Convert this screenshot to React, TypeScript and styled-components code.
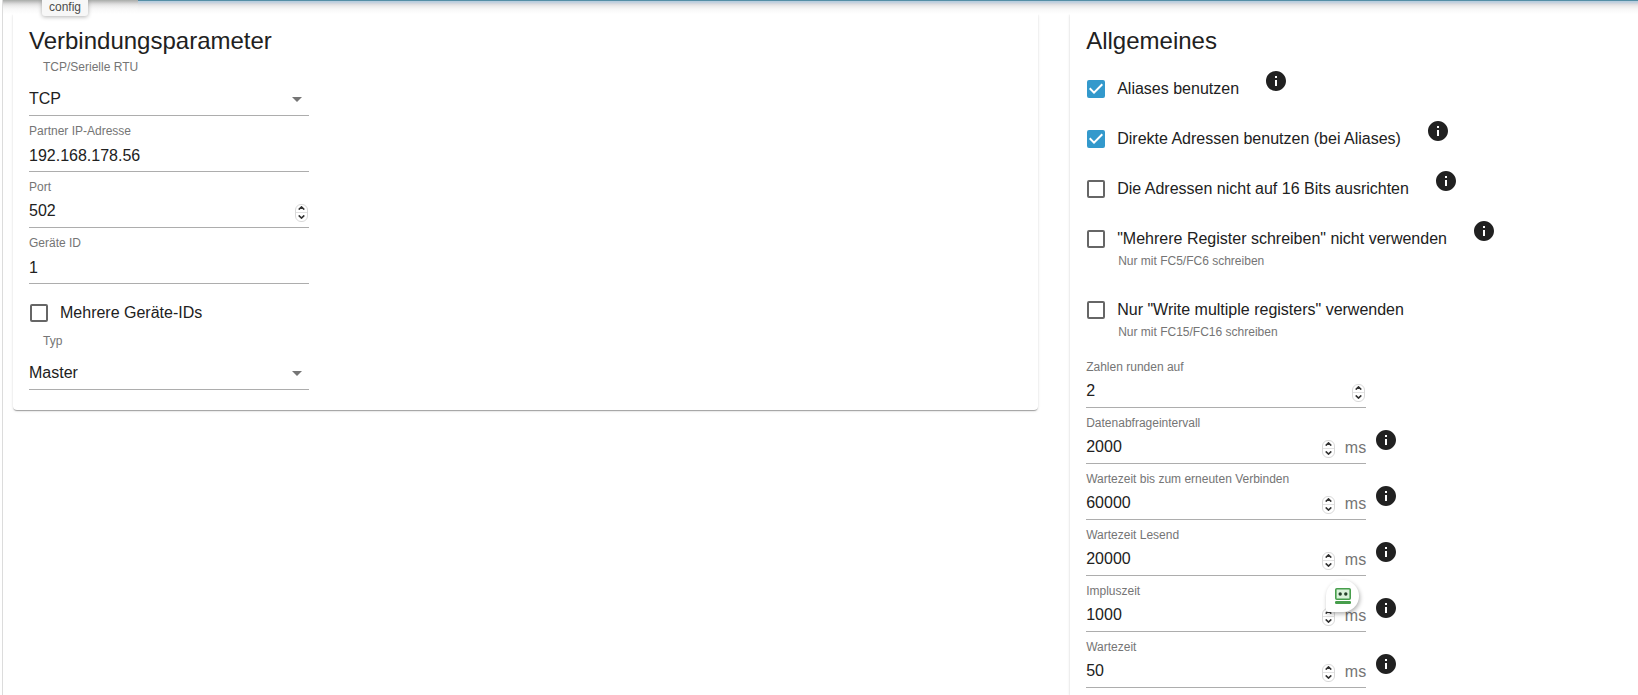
import React, { useId, useState } from "react";
import styled, { createGlobalStyle } from "styled-components";

const GlobalStyle = createGlobalStyle`
  *, *::before, *::after { box-sizing: border-box; }
  body {
    margin: 0;
    background: #fff;
    color: #212121;
    font-family: "Liberation Sans", Arial, sans-serif;
    font-size: 16px;
    line-height: 24px;
  }
`;

const Page = styled.div`
  display: flex;
  flex-direction: column;
  min-height: 100vh;
  margin-left: 2px;
  border-left: 1px solid #dcdcdc;
  overflow: hidden;
`;

const AppBar = styled.header`
  position: relative;
  height: 14px;
  border-top: 1px solid #558fa6;
  background: linear-gradient(#b4cbdc 0, #c8d3df 2px, #dcdcde 3px, #ebebeb 5px, #f7f7f7 8px, #fff 13px);
`;

const ActiveTab = styled.div`
  width: 135px;
  height: 14px;
  margin-top: -1px;
  background: linear-gradient(#a9aca9 0, #c4c4c4 2px, #dedede 4px, #ededed 6px, #f8f8f8 9px, #fff 14px);
`;

const Tooltip = styled.div`
  position: absolute;
  top: -1px;
  left: 39px;
  padding: 0 7px 1px;
  border-radius: 0 0 3px 3px;
  background: #f7f7f7;
  box-shadow: 0 1px 4px rgba(0, 0, 0, 0.3);
  color: #4c4c4c;
  font-size: 12px;
  line-height: 15px;
`;

const Columns = styled.main`
  display: grid;
  flex: 1;
  grid-template-columns: 65fr 36fr;
  gap: 32px;
  margin-left: 10px;
`;

const Card = styled.section<{ $fill?: boolean }>`
  align-self: ${(p) => (p.$fill ? "stretch" : "start")};
  padding: 9px 16px ${(p) => (p.$fill ? "7px" : "20px")};
  border-radius: ${(p) => (p.$fill ? "0" : "0 0 4px 4px")};
  box-shadow: 0 2px 1px -1px rgba(0, 0, 0, 0.2), 0 1px 1px rgba(0, 0, 0, 0.14),
    0 1px 3px rgba(0, 0, 0, 0.12);
  clip-path: ${(p) => (p.$fill ? "inset(0 0 0 -4px)" : "inset(0 -4px -4px -4px)")};
`;

const Title = styled.h2`
  margin: 0;
  font-size: 24px;
  font-weight: 400;
  line-height: 36px;
`;

const Options = styled.div`
  padding-top: 5px;
`;

const FieldRow = styled.div`
  display: flex;
  align-items: flex-start;
  gap: 8px;
`;

const FieldBox = styled.div`
  position: relative;
  width: 280px;
  max-width: 100%;
  padding-top: 7px;
  border-bottom: 1px solid #adadad;
`;

const SelectBox = styled(FieldBox)`
  padding-top: 0;
`;

const FieldLabel = styled.label`
  display: block;
  color: #757575;
  font-size: 12px;
  line-height: 16px;
`;

const SelectLabel = styled(FieldLabel)`
  padding: 0 0 8px 14px;
`;

const Control = styled.div`
  display: flex;
  align-items: center;
  height: 32px;
`;

const TextInput = styled.input`
  flex: 1;
  min-width: 0;
  height: 32px;
  padding: 0;
  border: 0;
  outline: 0;
  background: transparent;
  color: inherit;
  font: inherit;
  appearance: textfield;

  &[type="text"] {
    padding-top: 2px;
  }

  &::-webkit-inner-spin-button,
  &::-webkit-outer-spin-button {
    margin: 0;
    appearance: none;
  }
`;

const SelectInput = styled.select`
  grid-area: 1 / 1;
  width: 100%;
  height: 32px;
  padding: 0 24px 0 0;
  border: 0;
  outline: 0;
  appearance: none;
  background: transparent;
  color: inherit;
  font: inherit;
`;

const SelectControl = styled.div`
  display: grid;
  align-items: center;
`;

const DropArrow = styled.svg`
  grid-area: 1 / 1;
  justify-self: end;
  width: 24px;
  height: 24px;
  fill: #757575;
  pointer-events: none;
`;

const Spinner = styled.span`
  display: flex;
  flex-direction: column;
  width: 13px;
  height: 18px;
  margin: 3px 1px 0 0;
  border: 1px solid #d9d9d9;
  border-radius: 6px;
  overflow: hidden;
`;

const Step = styled.button`
  display: flex;
  flex: 1;
  align-items: center;
  justify-content: center;
  padding: 0;
  border: 0;
  background: transparent;

  & + & {
    border-top: 1px solid #e2e2e2;
  }

  svg {
    width: 7px;
    height: 4px;
    fill: none;
    stroke: #333;
    stroke-width: 1.6;
  }
`;

const Unit = styled.span`
  padding: 2px 0 0 9px;
  color: #757575;
`;

const OptionRow = styled.div<{ $spaced?: boolean }>`
  display: flex;
  align-items: flex-start;
  margin-bottom: ${(p) => (p.$spaced ? "4px" : "0")};
`;

const OptionText = styled.div<{ $hinted?: boolean }>`
  padding: 13px 0 ${(p) => (p.$hinted ? "12px" : "13px")};
`;

const CheckLabel = styled.label`
  display: flex;
  align-items: center;
  gap: 12px;
`;

const SingleCheck = styled.div`
  padding: 17px 0 8px;
`;

const CheckMark = styled.span`
  display: grid;
  margin-left: 1px;

  input {
    grid-area: 1 / 1;
    width: 18px;
    height: 18px;
    margin: 0;
    border: 2px solid #666;
    border-radius: 2px;
    appearance: none;
  }

  input:checked {
    border-color: #3399cc;
    background: #3399cc;
  }

  svg {
    grid-area: 1 / 1;
    width: 18px;
    height: 18px;
    fill: #fff;
    pointer-events: none;
  }

  input:not(:checked) + svg {
    visibility: hidden;
  }
`;

const Hint = styled.p`
  margin: 2px 0 0 32px;
  color: #757575;
  font-size: 12px;
  line-height: 16px;
`;

const InfoSvg = styled.svg<{ $option?: boolean }>`
  flex: none;
  width: 24px;
  height: 24px;
  margin: ${(p) => (p.$option ? "5px 0 0 25px" : "20px 0 0")};
  fill: #212121;
`;

const Assistant = styled.button`
  position: absolute;
  top: 4px;
  right: 7px;
  display: flex;
  align-items: center;
  justify-content: center;
  width: 33px;
  height: 32px;
  padding: 0 0 1px;
  border: 0;
  border-radius: 17px 17px 17px 3px;
  background: #fff;
  box-shadow: 1px 2px 4px rgba(0, 0, 0, 0.3);
`;

function Info({ option }: { option?: boolean }) {
  return (
    <InfoSvg $option={option} viewBox="0 0 24 24" aria-hidden="true">
      <path d="M12 2C6.48 2 2 6.48 2 12s4.48 10 10 10 10-4.48 10-10S17.52 2 12 2zm1 15h-2v-6h2v6zm0-8h-2V7h2v2z" />
    </InfoSvg>
  );
}

function Checkbox({ label, checked }: { label: string; checked?: boolean }) {
  return (
    <CheckLabel>
      <CheckMark>
        <input type="checkbox" defaultChecked={checked} />
        <svg viewBox="3 3 18 18" aria-hidden="true">
          <path d="M10 17l-5-5 1.41-1.41L10 14.17l7.59-7.59L19 8z" />
        </svg>
      </CheckMark>
      {label}
    </CheckLabel>
  );
}

function Option(props: { label: string; checked?: boolean; hint?: string; info?: boolean; spaced?: boolean }) {
  return (
    <OptionRow $spaced={props.spaced}>
      <OptionText $hinted={Boolean(props.hint)}>
        <Checkbox label={props.label} checked={props.checked} />
        {props.hint && <Hint>{props.hint}</Hint>}
      </OptionText>
      {props.info && <Info option />}
    </OptionRow>
  );
}

function SelectField({ label, options }: { label: string; options: string[] }) {
  const id = useId();
  return (
    <SelectBox>
      <SelectLabel htmlFor={id}>{label}</SelectLabel>
      <SelectControl>
        <SelectInput id={id}>
          {options.map((o) => (
            <option key={o}>{o}</option>
          ))}
        </SelectInput>
        <DropArrow viewBox="0 0 24 24" aria-hidden="true">
          <path d="M7 10l5 5 5-5z" />
        </DropArrow>
      </SelectControl>
    </SelectBox>
  );
}

function TextField({ label, value }: { label: string; value: string }) {
  const id = useId();
  return (
    <FieldBox>
      <FieldLabel htmlFor={id}>{label}</FieldLabel>
      <Control>
        <TextInput id={id} type="text" defaultValue={value} />
      </Control>
    </FieldBox>
  );
}

function NumberField(props: { label: string; initial: number; unit?: string; assistant?: boolean }) {
  const id = useId();
  const [value, setValue] = useState(props.initial);
  return (
    <FieldRow>
      <FieldBox>
        <FieldLabel htmlFor={id}>{props.label}</FieldLabel>
        <Control>
          <TextInput id={id} type="number" value={value} onChange={(e) => setValue(Number(e.target.value))} />
          <Spinner>
            <Step type="button" tabIndex={-1} aria-label="Erhöhen" onClick={() => setValue(value + 1)}>
              <svg viewBox="0 0 7 4"><path d="M.7 3.6 3.5.9l2.8 2.7" /></svg>
            </Step>
            <Step type="button" tabIndex={-1} aria-label="Verringern" onClick={() => setValue(value - 1)}>
              <svg viewBox="0 0 7 4"><path d="M.7.4l2.8 2.7L6.3.4" /></svg>
            </Step>
          </Spinner>
          {props.unit && <Unit>{props.unit}</Unit>}
        </Control>
        {props.assistant && (
          <Assistant type="button" aria-label="Formular ausfüllen">
            <svg width="16" height="16" viewBox="0 0 16 16" aria-hidden="true">
              <rect x="0.8" y="0.8" width="14.4" height="10.4" rx="1" fill="#d9f2da" stroke="#479e4c" strokeWidth="1.6" />
              <circle cx="5.2" cy="6" r="1.7" fill="#24402a" />
              <circle cx="10.8" cy="6" r="1.7" fill="#24402a" />
              <rect y="13" width="16" height="3" rx="1.2" fill="#479e4c" />
            </svg>
          </Assistant>
        )}
      </FieldBox>
      {props.unit && <Info />}
    </FieldRow>
  );
}

export default function App() {
  return (
    <>
      <GlobalStyle />
      <Page>
        <AppBar>
          <ActiveTab />
          <Tooltip role="tooltip">config</Tooltip>
        </AppBar>
        <Columns>
          <Card>
            <Title>Verbindungsparameter</Title>
            <SelectField label="TCP/Serielle RTU" options={["TCP", "Serielle RTU"]} />
            <TextField label="Partner IP-Adresse" value="192.168.178.56" />
            <NumberField label="Port" initial={502} />
            <TextField label="Geräte ID" value="1" />
            <SingleCheck>
              <Checkbox label="Mehrere Geräte-IDs" />
            </SingleCheck>
            <SelectField label="Typ" options={["Master", "Slave"]} />
          </Card>
          <Card $fill>
            <Title>Allgemeines</Title>
            <Options>
              <Option label="Aliases benutzen" checked info />
              <Option label="Direkte Adressen benutzen (bei Aliases)" checked info />
              <Option label="Die Adressen nicht auf 16 Bits ausrichten" info />
              <Option
                label={'"Mehrere Register schreiben" nicht verwenden'}
                hint="Nur mit FC5/FC6 schreiben"
                info
                spaced
              />
              <Option label={'Nur "Write multiple registers" verwenden'} hint="Nur mit FC15/FC16 schreiben" />
            </Options>
            <NumberField label="Zahlen runden auf" initial={2} />
            <NumberField label="Datenabfrageintervall" initial={2000} unit="ms" />
            <NumberField label="Wartezeit bis zum erneuten Verbinden" initial={60000} unit="ms" />
            <NumberField label="Wartezeit Lesend" initial={20000} unit="ms" />
            <NumberField label="Impluszeit" initial={1000} unit="ms" assistant />
            <NumberField label="Wartezeit" initial={50} unit="ms" />
          </Card>
        </Columns>
      </Page>
    </>
  );
}
